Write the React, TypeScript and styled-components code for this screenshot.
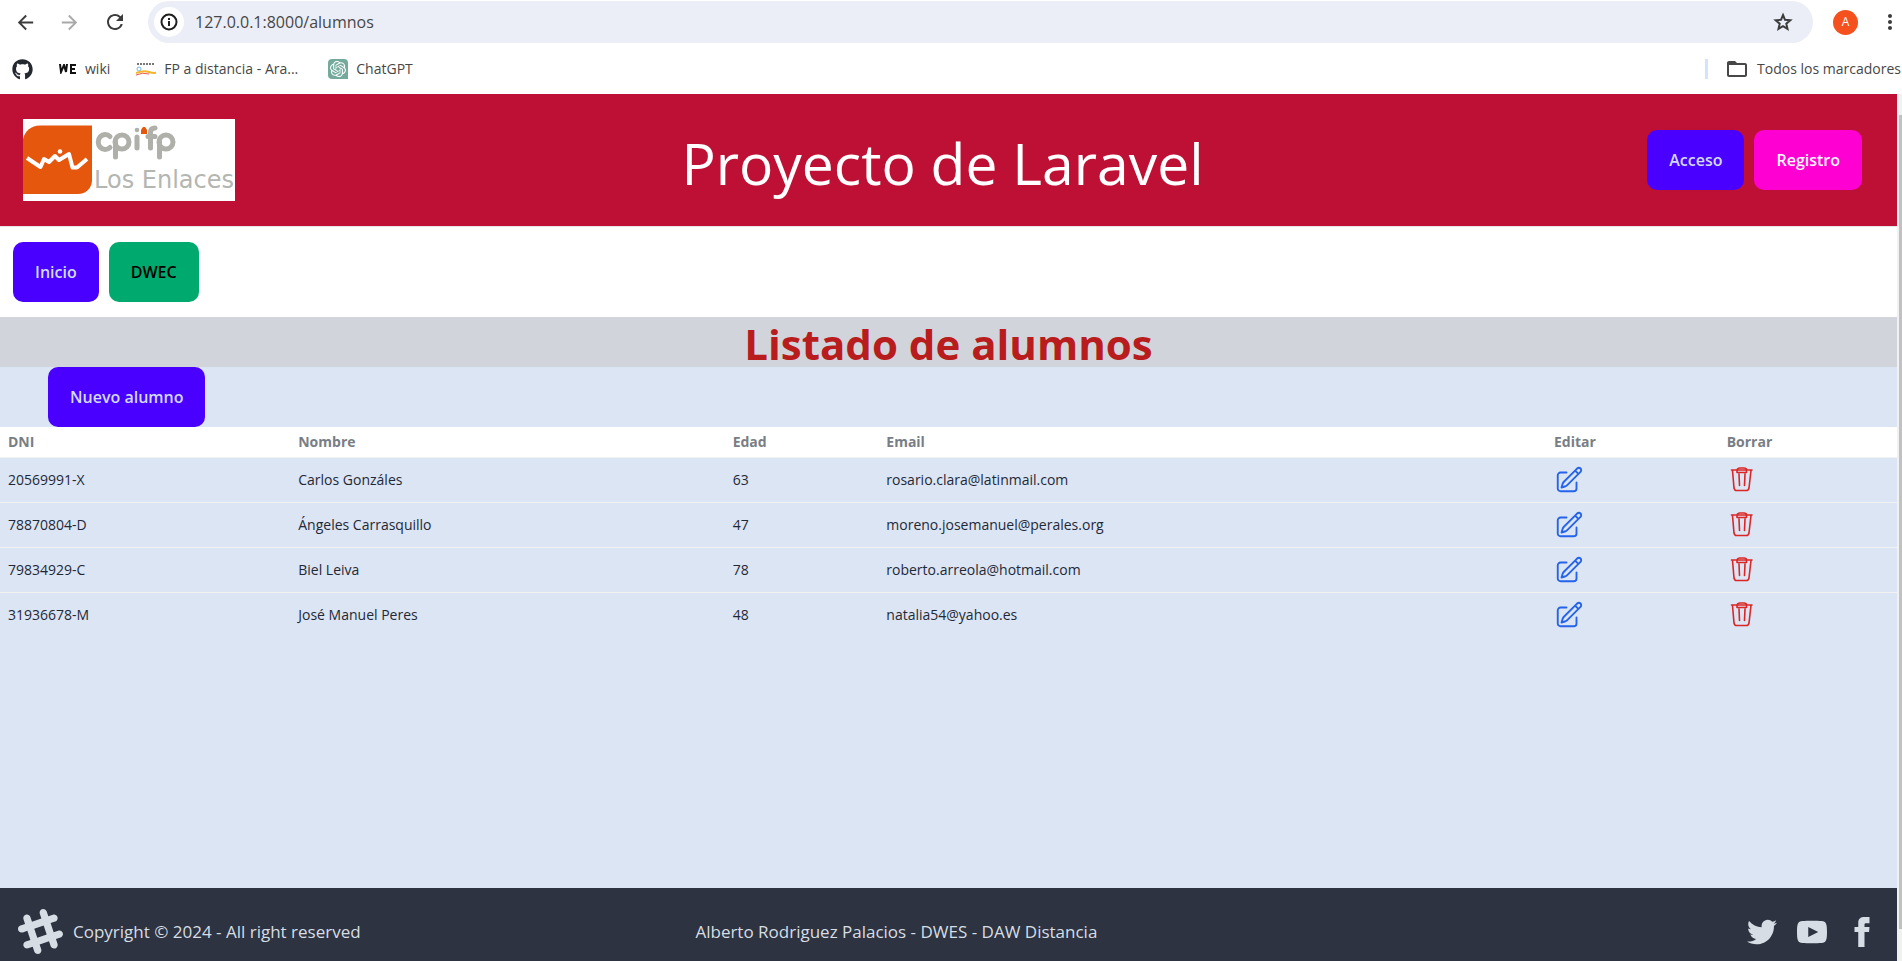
import React from "react";
import styled, { createGlobalStyle } from "styled-components";
import { HiOutlinePencilSquare } from "react-icons/hi2";
import { FaGithub } from "react-icons/fa";
import { MdArrowBack, MdArrowForward, MdRefresh, MdMoreVert, MdFolderOpen } from "react-icons/md";
import { SiOpenai } from "react-icons/si";

const GlobalStyle = createGlobalStyle`
  *, *::before, *::after { box-sizing: border-box; }
  html, body, #root { height: 100%; }
  body {
    margin: 0;
    overflow: hidden;
    background: #ffffff;
    color: #1f2937;
    font-family: "Open Sans", "Noto Sans", sans-serif;
    font-size: 15px;
    line-height: 24px;
  }
  button, input { font: inherit; }
  a { color: inherit; text-decoration: none; }
`;

const Window = styled.div`
  display: flex;
  flex-direction: column;
  height: 100vh;
`;

const Toolbar = styled.div`
  display: flex;
  align-items: center;
  height: 44px;
  padding: 0 0 0 14px;
  color: #474747;
`;

const ToolButton = styled.button<{ $dim?: boolean; $gap?: number }>`
  display: flex;
  flex: none;
  padding: 0;
  margin-right: ${(p) => p.$gap ?? 0}px;
  border: 0;
  background: none;
  color: ${(p) => (p.$dim ? "#a9a9a9" : "#3c3c3c")};
`;

const AddressBar = styled.div`
  display: flex;
  flex: 1;
  align-items: center;
  height: 42px;
  padding: 0 19px 0 6px;
  border-radius: 21px;
  background: #ebeef7;
`;

const SiteInfo = styled.button`
  display: grid;
  place-items: center;
  width: 30px;
  height: 30px;
  padding: 0;
  border: 0;
  border-radius: 50%;
  background: #ffffff;
  color: #1f1f1f;
`;

const AddressInput = styled.input`
  flex: 1;
  min-width: 0;
  padding: 0 0 0 11px;
  border: 0;
  outline: 0;
  background: none;
  color: #474747;
  font-size: 16px;
`;

const Avatar = styled.button`
  width: 25px;
  height: 25px;
  margin: 0 20px;
  padding: 0;
  border: 0;
  border-radius: 50%;
  background: #f4511e;
  color: #ffffff;
  font-size: 12px;
  line-height: 24px;
`;

const Bookmarks = styled.nav`
  display: flex;
  align-items: center;
  height: 50px;
  padding: 0 1px 0 12px;
  color: #474747;
  font-size: 14px;
`;

const Bookmark = styled.a<{ $gap: number }>`
  display: flex;
  align-items: center;
  gap: 8px;
  margin-right: ${(p) => p.$gap}px;
  white-space: nowrap;
`;

const AllBookmarks = styled.button`
  display: flex;
  align-items: center;
  gap: 8px;
  margin-left: auto;
  padding: 0 0 0 20px;
  border: 0;
  background: linear-gradient(#d3e3fd, #d3e3fd) left center / 3px 20px no-repeat;
  color: #474747;
  white-space: nowrap;
`;

const Viewport = styled.div`
  display: flex;
  flex: 1;
  min-height: 0;
`;

const Page = styled.div`
  display: flex;
  flex: 1;
  flex-direction: column;
  min-width: 0;
`;

const Scrollbar = styled.div`
  width: 5px;
  padding: 21px 0 32px 2px;
  background: #f1f1f1;
`;

const Thumb = styled.div`
  height: 100%;
  background: #c1c1c1;
`;

const Header = styled.header`
  display: grid;
  grid-template-columns: 1fr auto 1fr;
  align-items: center;
  height: 132px;
  padding: 0 35px 0 23px;
  background: #be0f34;
`;

const Logo = styled.svg`
  display: block;
`;

const SiteTitle = styled.h1`
  margin: 0;
  padding-top: 6px;
  color: #ffffff;
  font-size: 57px;
  font-weight: 400;
  line-height: 60px;
`;

const Actions = styled.div`
  display: flex;
  gap: 10px;
  justify-content: flex-end;
`;

const tones = {
  primary: ["#4a00ff", "#d1dbff"],
  secondary: ["#ff00d3", "#fff8fd"],
  success: ["#00a96e", "#000000"],
};

const Button = styled.button<{ $tone: keyof typeof tones }>`
  height: 60px;
  padding: 0 22px;
  border: 0;
  border-radius: 10px;
  background: ${(p) => tones[p.$tone][0]};
  color: ${(p) => tones[p.$tone][1]};
  font-size: 16px;
  font-weight: 600;
  white-space: nowrap;
`;

const Menu = styled.nav`
  display: flex;
  gap: 10px;
  height: 91px;
  padding: 15px 13px;
  border-top: 1px solid #e5e6e6;
`;

const Main = styled.main`
  flex: 1;
  background: #dbe5f4;
`;

const Heading = styled.h2`
  margin: 0;
  padding-top: 4px;
  background: #d1d5db;
  color: #b91c1c;
  font-size: 42px;
  font-weight: 700;
  line-height: 46px;
  text-align: center;
`;

const NewRow = styled.div`
  display: flex;
  padding-left: 48px;
`;

const Table = styled.table`
  width: 100%;
  border-collapse: separate;
  border-spacing: 0;
  table-layout: fixed;
  text-align: left;
  font-size: 14px;
  line-height: 20px;
`;

const Column = styled.col<{ $share: number }>`
  width: ${(p) => p.$share}%;
`;

const Th = styled.th`
  height: 31px;
  padding: 0 8px;
  border-bottom: 1px solid #f2f2f2;
  background: #ffffff;
  color: #797e85;
  font-weight: 700;
`;

const Td = styled.td`
  height: 45px;
  padding: 0 8px;
  border-bottom: 1px solid #f2f2f2;
  tr:last-child > & { border-bottom-color: transparent; }
`;

const IconButton = styled.button<{ $danger?: boolean }>`
  display: flex;
  padding: 0;
  border: 0;
  background: none;
  color: ${(p) => (p.$danger ? "#dc2626" : "#2563eb")};
`;

const Footer = styled.footer`
  display: grid;
  grid-template-columns: auto auto auto;
  gap: 20px;
  align-items: center;
  height: 73px;
  padding: 14px 20px 0 18px;
  background: #2d3340;
  color: #d7dde4;
  font-size: 17px;
`;

const Copyright = styled.div`
  display: flex;
  align-items: center;
  gap: 10px;
`;

const Social = styled.nav`
  display: flex;
  gap: 20px;
  justify-content: flex-end;
`;

const SocialLink = styled.a`
  display: flex;
`;

const students = [
  { dni: "20569991-X", name: "Carlos Gonzáles", age: 63, email: "rosario.clara@latinmail.com" },
  { dni: "78870804-D", name: "Ángeles Carrasquillo", age: 47, email: "moreno.josemanuel@perales.org" },
  { dni: "79834929-C", name: "Biel Leiva", age: 78, email: "roberto.arreola@hotmail.com" },
  { dni: "31936678-M", name: "José Manuel Peres", age: 48, email: "natalia54@yahoo.es" },
];

const columns = [
  { label: "DNI", share: 15.3 },
  { label: "Nombre", share: 22.9 },
  { label: "Edad", share: 8.1 },
  { label: "Email", share: 35.2 },
  { label: "Editar", share: 9.1 },
  { label: "Borrar", share: 9.4 },
];

const socials = [
  { name: "Twitter", path: "M24 4.557c-.883.392-1.832.656-2.828.775 1.017-.609 1.798-1.574 2.165-2.724-.951.564-2.005.974-3.127 1.195-.897-.957-2.178-1.555-3.594-1.555-3.179 0-5.515 2.966-4.797 6.045-4.091-.205-7.719-2.165-10.148-5.144-1.29 2.213-.669 5.108 1.523 6.574-.806-.026-1.566-.247-2.229-.616-.054 2.281 1.581 4.415 3.949 4.89-.693.188-1.452.232-2.224.084.626 1.956 2.444 3.379 4.6 3.419-2.07 1.623-4.678 2.348-7.29 2.04 2.179 1.397 4.768 2.212 7.548 2.212 9.142 0 14.307-7.721 13.995-14.646.962-.695 1.797-1.562 2.457-2.549z" },
  { name: "YouTube", path: "M19.615 3.184c-3.604-.246-11.631-.245-15.23 0-3.897.266-4.356 2.62-4.385 8.816.029 6.185.484 8.549 4.385 8.816 3.6.245 11.626.246 15.23 0 3.897-.266 4.356-2.62 4.385-8.816-.029-6.185-.484-8.549-4.385-8.816zm-10.615 12.816v-8l8 3.993-8 4.007z" },
  { name: "Facebook", path: "M9 8h-3v4h3v12h5v-12h3.642l.358-4h-4v-1.667c0-.955.192-1.333 1.115-1.333h2.885v-5h-3.808c-3.596 0-5.192 1.583-5.192 4.615v3.385z" },
];

function SchoolLogo() {
  return (
    <Logo width="212" height="82" viewBox="0 0 212 82" role="img" aria-label="cpifp Los Enlaces">
      <rect width="212" height="82" fill="#fff" />
      <path d="M0 20C2 12 8 6.500 17 6.500H69V61C69 69 63 75 55 75H0Z" fill="#e4570c" />
      <path d="M4 39L17.500 48L21 40L26 43L32 37L36 41L46 35L49.500 48.500H54L64 40" fill="none" stroke="#fff" strokeWidth="4" strokeLinejoin="round" />
      <circle cx="37" cy="32.500" r="2.300" fill="#fff" />
      <g fill="none" stroke="#aeb0a9" strokeWidth="5" strokeLinecap="round">
        <path d="M87 17.500A7 7.500 0 1 0 87 28.500" />
        <circle cx="99" cy="23" r="7" />
        <path d="M92.500 23V38M114 18V29M127.500 29V13Q127.500 9 132 9M125 17.500H132" />
        <circle cx="143" cy="23" r="7" />
        <path d="M136.500 23V38" />
      </g>
      <circle cx="114" cy="11" r="2.300" fill="#aeb0a9" />
      <path d="M118 15V11Q121 4.500 124 11V15Z" fill="#e4570c" />
      <text x="71" y="69" fill="#b4b6b2" fontFamily="'DejaVu Sans', sans-serif" fontSize="24">Los Enlaces</text>
    </Logo>
  );
}

function InfoIcon() {
  return (
    <svg width="18" height="18" viewBox="0 0 18 18" fill="none" stroke="currentColor" strokeWidth="2" aria-hidden="true">
      <circle cx="9" cy="9" r="7.500" />
      <path d="M9 8V13M9 5V7" />
    </svg>
  );
}

function StarIcon() {
  return (
    <svg width="22" height="22" viewBox="0 0 22 22" fill="none" stroke="currentColor" strokeWidth="2" aria-hidden="true">
      <path d="M11 4L13 8.800L18.300 9.300L14.300 12.700L15.500 17.800L11 15.100L6.500 17.800L7.700 12.700L3.700 9.300L9 8.800Z" />
    </svg>
  );
}

function TrashIcon() {
  return (
    <svg width="32" height="32" viewBox="0 0 32 32" fill="none" stroke="currentColor" strokeWidth="1.600" strokeLinecap="round" strokeLinejoin="round" aria-hidden="true">
      <path d="M4.500 6H25M5.500 6.500L7 24Q7.500 26.500 9.500 26.500H19.500Q21.500 26.500 22 24L24 6.500M10 8.500V6Q10.500 4 13 4H17Q19.500 4 19.500 6V8.500ZM12 10L12.500 21.500M18 10L17.500 21.500" />
    </svg>
  );
}

export default function App() {
  return (
    <Window>
      <GlobalStyle />
      <Toolbar>
        <ToolButton $gap={21} aria-label="Atrás"><MdArrowBack size={23} /></ToolButton>
        <ToolButton $gap={22} $dim aria-label="Adelante"><MdArrowForward size={23} /></ToolButton>
        <ToolButton $gap={21} aria-label="Recargar"><MdRefresh size={24} /></ToolButton>
        <AddressBar>
          <SiteInfo aria-label="Información del sitio"><InfoIcon /></SiteInfo>
          <AddressInput aria-label="Dirección" defaultValue="127.0.0.1:8000/alumnos" />
          <ToolButton aria-label="Añadir a marcadores"><StarIcon /></ToolButton>
        </AddressBar>
        <Avatar aria-label="Perfil">A</Avatar>
        <ToolButton aria-label="Menú"><MdMoreVert size={24} /></ToolButton>
      </Toolbar>
      <Bookmarks aria-label="Marcadores">
        <Bookmark href="#github" $gap={26} aria-label="GitHub"><FaGithub size={21} color="#24292f" /></Bookmark>
        <Bookmark href="#wiki" $gap={26}>
          <svg width="18" height="10" viewBox="0 0 18 10" fill="none" stroke="#111" strokeWidth="2" aria-hidden="true">
            <path d="M1 0L2 8L5 1L7 8L8 0M17 1H12V9H17M12 5H16" />
          </svg>
          wiki
        </Bookmark>
        <Bookmark href="#fp" $gap={30}>
          <svg width="20" height="20" viewBox="0 0 20 20" fill="none" aria-hidden="true">
            <path d="M1 5H19" stroke="#777" strokeWidth="2" strokeDasharray="2 1" />
            <circle cx="3" cy="10" r="2" stroke="#6db9e8" />
            <path d="M0 14Q7 11 13 13T20 13" stroke="#f6b52b" strokeWidth="2" />
            <path d="M0 16Q7 13 13 15" stroke="#e85b4e" strokeWidth="1" />
          </svg>
          FP a distancia - Ara...
        </Bookmark>
        <Bookmark href="#chatgpt" $gap={0}>
          <svg width="20" height="20" viewBox="0 0 20 20" aria-hidden="true">
            <path d="M4 0H16Q20 0 20 4V20H4Q0 20 0 16V4Q0 0 4 0Z" fill="#74aa9c" />
            <SiOpenai x={2} y={2} size={16} color="#fff" />
          </svg>
          ChatGPT
        </Bookmark>
        <AllBookmarks><MdFolderOpen size={24} />Todos los marcadores</AllBookmarks>
      </Bookmarks>
      <Viewport>
        <Page>
          <Header>
            <SchoolLogo />
            <SiteTitle>Proyecto de Laravel</SiteTitle>
            <Actions>
              <Button $tone="primary">Acceso</Button>
              <Button $tone="secondary">Registro</Button>
            </Actions>
          </Header>
          <Menu>
            <Button $tone="primary">Inicio</Button>
            <Button $tone="success">DWEC</Button>
          </Menu>
          <Main>
            <Heading>Listado de alumnos</Heading>
            <NewRow><Button $tone="primary">Nuevo alumno</Button></NewRow>
            <Table>
              <colgroup>{columns.map((c) => <Column key={c.label} $share={c.share} />)}</colgroup>
              <thead>
                <tr>{columns.map((c) => <Th key={c.label} scope="col">{c.label}</Th>)}</tr>
              </thead>
              <tbody>
                {students.map((s) => (
                  <tr key={s.dni}>
                    <Td>{s.dni}</Td>
                    <Td>{s.name}</Td>
                    <Td>{s.age}</Td>
                    <Td>{s.email}</Td>
                    <Td><IconButton aria-label={`Editar ${s.name}`}><HiOutlinePencilSquare size={30} /></IconButton></Td>
                    <Td><IconButton $danger aria-label={`Borrar ${s.name}`}><TrashIcon /></IconButton></Td>
                  </tr>
                ))}
              </tbody>
            </Table>
          </Main>
          <Footer>
            <Copyright>
              <svg width="45" height="45" viewBox="0 0 24 24" fill="currentColor" fillRule="evenodd" aria-hidden="true">
                <path d="M22.672 15.226l-2.432.811.841 2.515c.33 1.019-.209 2.127-1.23 2.456-1.15.325-2.148-.321-2.463-1.226l-.84-2.518-5.013 1.677.84 2.517c.391 1.203-.434 2.542-1.831 2.542-.88 0-1.601-.564-1.86-1.314l-.842-2.516-2.431.809c-1.135.328-2.145-.317-2.463-1.229-.329-1.018.211-2.127 1.231-2.456l2.432-.809-1.621-4.823-2.432.808c-1.355.384-2.558-.59-2.558-1.839 0-.817.509-1.582 1.327-1.846l2.433-.809-.842-2.515c-.33-1.02.211-2.129 1.232-2.458 1.02-.329 2.13.209 2.461 1.229l.842 2.515 5.011-1.677-.839-2.517c-.403-1.238.484-2.553 1.843-2.553.819 0 1.585.509 1.85 1.326l.841 2.517 2.431-.81c1.02-.33 2.131.211 2.461 1.229.332 1.018-.21 2.126-1.23 2.456l-2.433.809 1.622 4.823 2.433-.809c1.242-.401 2.557.484 2.557 1.838 0 .819-.51 1.583-1.328 1.847m-8.992-6.428l-5.01 1.675 1.619 4.828 5.011-1.674-1.62-4.829z" />
              </svg>
              <span>Copyright © 2024 - All right reserved</span>
            </Copyright>
            <span>Alberto Rodriguez Palacios - DWES - DAW Distancia</span>
            <Social aria-label="Redes sociales">
              {socials.map((s) => (
                <SocialLink key={s.name} href={`#${s.name}`} aria-label={s.name}>
                  <svg width="30" height="30" viewBox="0 0 24 24" fill="currentColor" aria-hidden="true"><path d={s.path} /></svg>
                </SocialLink>
              ))}
            </Social>
          </Footer>
        </Page>
        <Scrollbar><Thumb /></Scrollbar>
      </Viewport>
    </Window>
  );
}
